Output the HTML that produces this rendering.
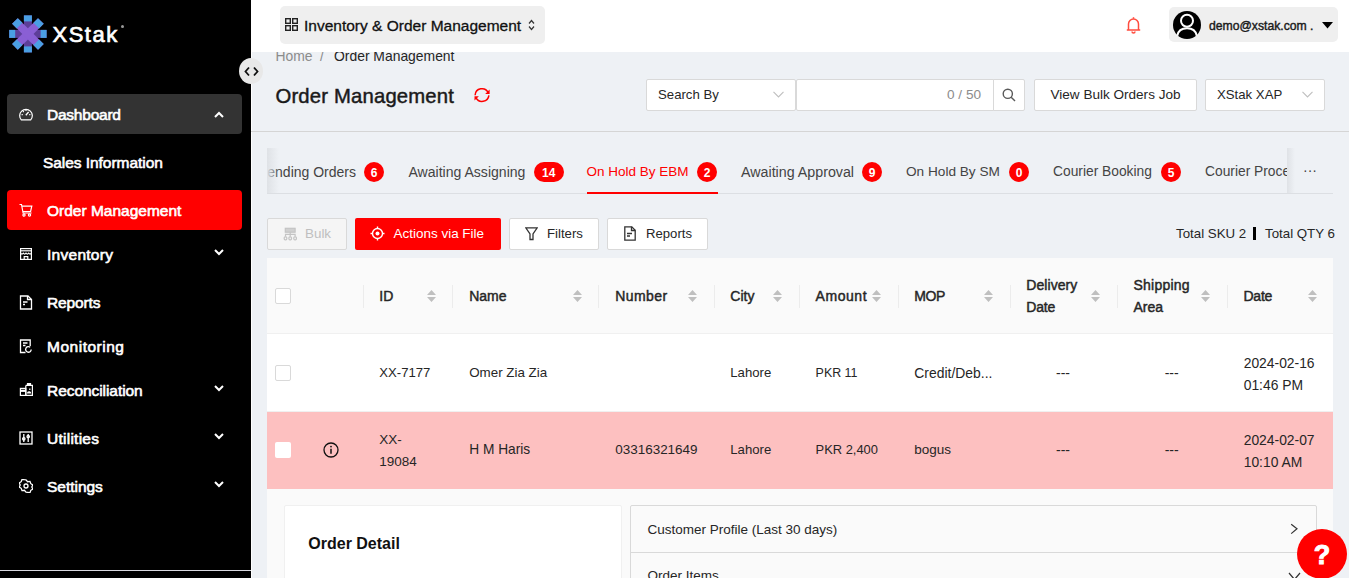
<!DOCTYPE html>
<html><head><meta charset="utf-8">
<style>
*{box-sizing:border-box;margin:0;padding:0}
html,body{width:1349px;height:578px;overflow:hidden;background:#eef1f5;font-family:"Liberation Sans",sans-serif;color:#222}
.a{position:absolute}
.t{position:absolute;white-space:nowrap;line-height:20px}
#side{position:absolute;left:0;top:0;width:252px;height:578px;background:#000;border-right:1px solid #fff}
#side .item{position:absolute;left:7px;width:235px;height:40px;border-radius:4px}
#side .lbl{position:absolute;left:47px;color:#fff;font-size:15.5px;line-height:20px;white-space:nowrap;-webkit-text-stroke:0.6px #fff}
#side svg{position:absolute}
.bd{height:20px;border-radius:10px;background:#f00;color:#fff;font-weight:bold;font-size:12px;line-height:22px;text-align:center}
.hd{color:#262626;-webkit-text-stroke:0.45px #262626}
.td{color:#262626}
#top{position:absolute;left:252px;top:0;width:1097px;height:52px;background:#fff}
</style></head><body>

<!-- SIDEBAR -->
<div id="side">
  <!-- logo -->
  <svg class="a" style="left:6px;top:12px" width="44" height="44" viewBox="0 0 44 44">
    <g transform="translate(21.9 21.9)">
      <rect x="-4" y="-18.5" width="8" height="37" fill="#5d3e98"/>
      <rect x="-18.7" y="-4" width="37.4" height="8" fill="#5d3e98"/>
      <rect x="-4" y="-18.5" width="8" height="6" fill="#4a9fe3"/>
      <rect x="-4" y="12.5" width="8" height="6" fill="#4a9fe3"/>
      <rect x="-18.7" y="-4" width="6" height="8" fill="#4a9fe3"/>
      <rect x="12.7" y="-4" width="6" height="8" fill="#4a9fe3"/>
      <g transform="rotate(45)">
        <rect x="-4" y="-18.3" width="8" height="36.6" fill="#8a5fd4"/>
        <rect x="-18.3" y="-4" width="36.6" height="8" fill="#8a5fd4"/>
        <rect x="-4" y="-18.3" width="8" height="6.5" fill="#4a9fe3"/>
        <rect x="-4" y="11.8" width="8" height="6.5" fill="#4a9fe3"/>
        <rect x="-18.3" y="-4" width="6.5" height="8" fill="#4a9fe3"/>
        <rect x="11.8" y="-4" width="6.5" height="8" fill="#4a9fe3"/>
      </g>
    </g>
  </svg>
  <div class="t" style="left:52.5px;top:23px;font-size:22px;line-height:24px;color:#fff;letter-spacing:1.5px;-webkit-text-stroke:0.7px #fff">XStak</div>
  <div class="a" style="left:121px;top:25px;width:3px;height:3px;border-radius:2px;background:#999"></div>

  <div class="item" style="top:94px;height:40px;background:#333"></div>
  <svg style="left:19px;top:107px" width="14" height="14" viewBox="0 0 14 14" fill="none" stroke="#fff" stroke-width="1.2">
    <path d="M2.3 12.8A6.3 6.3 0 1 1 11.7 12.8Z"/>
    <path d="M6.8 8.2L9.6 5" stroke-width="1.3"/>
    <path d="M2.6 7.6h1.2M10.2 7.6h1.2M4 4.2l.8.8M7 2.8v1.1"/>
  </svg>
  <div class="lbl" style="top:105px;letter-spacing:-0.23px">Dashboard</div>
  <svg style="left:214px;top:111px" width="10" height="7" viewBox="0 0 10 7" fill="none" stroke="#fff" stroke-width="2"><path d="M1 6 L5 2 L9 6"/></svg>

  <div class="lbl" style="left:43px;top:153px;letter-spacing:-0.05px">Sales Information</div>

  <div class="item" style="top:190px;background:#f00"></div>
  <svg style="left:19px;top:203px" width="14" height="14" viewBox="0 0 14 14" fill="none" stroke="#fff" stroke-width="1.2">
    <path d="M0.5 1.5h2l1.6 8.5h8.5"/>
    <path d="M3 3.2h9.8l-1.2 5.3H4"/>
    <circle cx="5" cy="12" r="1.1"/><circle cx="10.5" cy="12" r="1.1"/>
  </svg>
  <div class="lbl" style="top:201px;letter-spacing:0.00px">Order Management</div>

  <svg style="left:19px;top:247px" width="14" height="14" viewBox="0 0 14 14" fill="none" stroke="#fff" stroke-width="1.2">
    <rect x="1.6" y="1.6" width="10.8" height="10.8"/>
    <path d="M1.6 3.8h10.8"/>
    <path d="M1.6 6.2c.9 1.2 1.8 1.2 2.7 0c.9 1.2 1.8 1.2 2.7 0c.9 1.2 1.8 1.2 2.7 0c.9 1.2 1.8 1.2 2.7 0"/>
    <path d="M5.2 12.4V9.6h3.6v2.8"/>
  </svg>
  <div class="lbl" style="top:245px;letter-spacing:0.27px">Inventory</div>
  <svg style="left:214px;top:249px" width="10" height="7" viewBox="0 0 10 7" fill="none" stroke="#fff" stroke-width="2"><path d="M1 1 L5 5 L9 1"/></svg>

  <svg style="left:19px;top:295px" width="14" height="15" viewBox="0 0 14 15" fill="none" stroke="#fff" stroke-width="1.3">
    <path d="M1.5 1h7.5l3.5 3.5V14H1.5Z"/>
    <path d="M8.5 1v3.5h4"/>
    <path d="M4 7h4.5M4 9.5h2"/>
  </svg>
  <div class="lbl" style="top:293px;letter-spacing:-0.13px">Reports</div>

  <svg style="left:19px;top:339px" width="14" height="15" viewBox="0 0 14 15" fill="none" stroke="#fff" stroke-width="1.3">
    <path d="M6.5 13.5H1.5V1H11.2V7"/>
    <path d="M4 4h4.5M4 6.5h2.5"/>
    <path d="M12.2 10.5a2.8 2.8 0 1 1-1-2.2"/>
  </svg>
  <div class="lbl" style="top:337px;letter-spacing:0.51px">Monitoring</div>

  <svg style="left:19px;top:382px" width="14" height="15" viewBox="0 0 14 15" fill="none" stroke="#fff" stroke-width="1.2">
    <path d="M6.8 3.4H13.4V13.4H6.8"/>
    <path d="M6.8 3.4V13.4"/>
    <path d="M8.5 1.5h3v2h-3z" fill="#fff"/>
    <rect x="1.4" y="6.4" width="5.4" height="7"/>
    <path d="M1.4 8.8h5.4" stroke-width="2.2"/>
    <path d="M8.6 11h3c0-1.6-3-1.6-3 0Z" fill="#fff"/>
    <path d="M10.8 6.5v1.6"/>
  </svg>
  <div class="lbl" style="top:381px;letter-spacing:-0.06px">Reconciliation</div>
  <svg style="left:214px;top:385px" width="10" height="7" viewBox="0 0 10 7" fill="none" stroke="#fff" stroke-width="2"><path d="M1 1 L5 5 L9 1"/></svg>

  <svg style="left:19px;top:431px" width="14" height="14" viewBox="0 0 14 14" fill="none" stroke="#fff" stroke-width="1.3">
    <rect x="1" y="1" width="12" height="12"/>
    <path d="M4.8 3v8M9.2 3v8"/>
    <circle cx="4.8" cy="7.8" r="1.2"/><circle cx="9.2" cy="5.5" r="1.2"/>
  </svg>
  <div class="lbl" style="top:429px;letter-spacing:0.25px">Utilities</div>
  <svg style="left:214px;top:433px" width="10" height="7" viewBox="0 0 10 7" fill="none" stroke="#fff" stroke-width="2"><path d="M1 1 L5 5 L9 1"/></svg>

  <svg style="left:19px;top:479px" width="14" height="14" viewBox="0 0 14 14" fill="none" stroke="#fff" stroke-width="1.3">
    <path d="M7 0.8l1.6 1.9 2.4-.3.8 2.3 2 1.3-1 2 1 2-2 1.3-.8 2.3-2.4-.3L7 13.2 5.4 11.3 3 11.6l-.8-2.3-2-1.3 1-2-1-2 2-1.3.8-2.3 2.4.3Z"/>
    <circle cx="7" cy="7" r="2"/>
  </svg>
  <div class="lbl" style="top:477px;letter-spacing:-0.02px">Settings</div>
  <svg style="left:214px;top:481px" width="10" height="7" viewBox="0 0 10 7" fill="none" stroke="#fff" stroke-width="2"><path d="M1 1 L5 5 L9 1"/></svg>

  <div class="a" style="left:0;top:570px;width:251px;height:1px;background:#d8d8e0"></div>
</div>

<!-- breadcrumb -->
<div class="t" style="left:275.5px;top:46px;font-size:13.9px;color:#8c8c8c">Home</div>
<div class="t" style="left:320px;top:46px;font-size:13.9px;color:#8c8c8c">/</div>
<div class="t" style="left:334px;top:46px;font-size:13.9px;color:#262626">Order Management</div>

<!-- CONTENT -->
<div class="t" style="left:275.5px;top:85px;font-size:20.3px;line-height:22px;color:#1a1a1a;-webkit-text-stroke:0.45px #1a1a1a;letter-spacing:0.17px">Order Management</div>
<svg class="a" style="left:474px;top:87px" width="16" height="16" viewBox="0 0 16 16" fill="none" stroke="#f00" stroke-width="1.5">
  <path d="M1.1 8.2A6.9 6.9 0 0 1 14.2 5.6"/><path d="M14.9 8.3A6.9 6.9 0 0 1 1.9 10.6"/>
  <path d="M15.6 2.6V7H11.2Z" fill="#f00" stroke="none"/><path d="M0.5 13.6V9.2H4.9Z" fill="#f00" stroke="none"/>
</svg>

<div class="a" style="left:251px;top:131px;width:1098px;height:1px;background:#d5d5d5"></div>

<!-- search row -->
<div class="a" style="left:646px;top:79px;width:150px;height:32px;background:#fff;border:1px solid #d9d9d9;border-radius:2px"></div>
<div class="t" style="left:658px;top:85px;font-size:13.2px;color:#262626">Search By</div>
<svg class="a" style="left:773px;top:91px" width="11" height="7" viewBox="0 0 11 7" fill="none" stroke="#bfbfbf" stroke-width="1.1"><path d="M0.5 0.8L5.5 6L10.5 0.8"/></svg>
<div class="a" style="left:796px;top:79px;width:198px;height:32px;background:#fff;border:1px solid #d9d9d9;border-radius:2px 0 0 2px"></div>
<div class="t" style="left:947px;top:85px;font-size:13.6px;color:#8c8c8c">0 / 50</div>
<div class="a" style="left:993px;top:79px;width:32px;height:32px;background:#fff;border:1px solid #d9d9d9;border-radius:0 2px 2px 0"></div>
<svg class="a" style="left:1002px;top:88px" width="14" height="14" viewBox="0 0 14 14" fill="none" stroke="#595959" stroke-width="1.4"><circle cx="5.8" cy="5.8" r="4.6"/><path d="M9.2 9.2L13 13"/></svg>
<div class="a" style="left:1034px;top:79px;width:163px;height:32px;background:#fff;border:1px solid #d9d9d9;border-radius:2px"></div>
<div class="t" style="left:1050.5px;top:85px;font-size:13.55px;color:#262626">View Bulk Orders Job</div>
<div class="a" style="left:1205px;top:79px;width:120px;height:32px;background:#fff;border:1px solid #d9d9d9;border-radius:2px"></div>
<div class="t" style="left:1217px;top:85px;font-size:13.2px;color:#262626">XStak XAP</div>
<svg class="a" style="left:1302px;top:91px" width="11" height="7" viewBox="0 0 11 7" fill="none" stroke="#bfbfbf" stroke-width="1.1"><path d="M0.5 0.8L5.5 6L10.5 0.8"/></svg>

<!-- tabs -->
<div class="a" style="left:267px;top:193px;width:1066px;height:1px;background:#dcdfe3"></div>
<div class="t" style="left:228px;top:162px;font-size:14px;color:#444;width:128px;text-align:right;overflow:hidden;clip-path:inset(0 0 0 39px)">Pending Orders</div>
<div class="a" style="left:267px;top:148px;width:12px;height:45px;background:linear-gradient(to right,#dfe2e6,rgba(238,241,245,0))"></div>
<div class="a bd" style="left:364px;top:162px;width:20px">6</div>
<div class="t" style="left:408.5px;top:162px;font-size:14.06px;color:#444">Awaiting Assigning</div>
<div class="a bd" style="left:534px;top:162px;width:29.5px">14</div>
<div class="t" style="left:586.5px;top:162px;font-size:13.5px;color:#f00">On Hold By EBM</div>
<div class="a bd" style="left:697px;top:162px;width:20px">2</div>
<div class="a" style="left:586.5px;top:192px;width:131px;height:2px;background:#f00"></div>
<div class="t" style="left:741px;top:162px;font-size:14.25px;color:#444">Awaiting Approval</div>
<div class="a bd" style="left:862px;top:162px;width:20px">9</div>
<div class="t" style="left:906px;top:162px;font-size:13.64px;color:#444">On Hold By SM</div>
<div class="a bd" style="left:1009px;top:162px;width:20px">0</div>
<div class="t" style="left:1053px;top:162px;font-size:13.8px;color:#444">Courier Booking</div>
<div class="a bd" style="left:1161px;top:162px;width:20px">5</div>
<div class="t" style="left:1205px;top:162px;font-size:13.8px;color:#444;width:82px;overflow:hidden">Courier Processing</div>
<div class="a" style="left:1287px;top:148px;width:8px;height:45px;background:linear-gradient(to right,#dfe2e6,rgba(238,241,245,0))"></div>
<div class="t" style="left:1303px;top:160px;font-size:14px;color:#444;letter-spacing:0px">&middot;&middot;&middot;</div>

<!-- action buttons -->
<div class="a" style="left:267px;top:218px;width:80px;height:32px;background:#f5f5f5;border:1px solid #d9d9d9;border-radius:2px"></div>
<svg class="a" style="left:283px;top:227px" width="15" height="14" viewBox="0 0 15 14" fill="none" stroke="#c4c4c4" stroke-width="1.2"><rect x="2.3" y="1.3" width="9.8" height="3.9" fill="#d0d0d0"/><path d="M7.2 5.2v2.2M2.5 9.5V7.4h9.6v2.1M7.2 7.4v2.1"/><rect x="1.2" y="9.8" width="2.6" height="3" rx="1"/><rect x="5.9" y="9.8" width="2.6" height="3" rx="1"/><rect x="10.8" y="9.8" width="2.6" height="3" rx="1"/></svg>
<div class="t" style="left:305px;top:224px;font-size:13.4px;color:#bfbfbf">Bulk</div>
<div class="a" style="left:355px;top:218px;width:146px;height:32px;background:#f00;border-radius:2px"></div>
<svg class="a" style="left:370px;top:226px" width="15" height="15" viewBox="0 0 15 15" fill="none" stroke="#fff" stroke-width="1.4"><circle cx="7.5" cy="7.5" r="5"/><circle cx="7.5" cy="7.5" r="2" fill="#fff" stroke="none"/><path d="M7.5 0.5v2.5M7.5 12v2.5M0.5 7.5h2.5M12 7.5h2.5"/></svg>
<div class="t" style="left:393.5px;top:224px;font-size:13.48px;color:#fff">Actions via File</div>
<div class="a" style="left:509px;top:218px;width:90px;height:32px;background:#fff;border:1px solid #d9d9d9;border-radius:2px"></div>
<svg class="a" style="left:525px;top:227px" width="13" height="14" viewBox="0 0 13 14" fill="none" stroke="#333" stroke-width="1.3"><path d="M0.8 0.8h11.4L8 7v5.5H5V7Z"/></svg>
<div class="t" style="left:547px;top:224px;font-size:13.2px;color:#262626">Filters</div>
<div class="a" style="left:607px;top:218px;width:101px;height:32px;background:#fff;border:1px solid #d9d9d9;border-radius:2px"></div>
<svg class="a" style="left:624px;top:226px" width="12" height="15" viewBox="0 0 12 15" fill="none" stroke="#333" stroke-width="1.3"><path d="M0.8 0.8h7l3.4 3.4v10H0.8Z"/><path d="M7.5 0.8v3.7h3.7M3 7.5h5M3 10h3"/></svg>
<div class="t" style="left:646px;top:224px;font-size:13.14px;color:#262626">Reports</div>

<div class="t" style="left:1176px;top:224px;font-size:13.3px;color:#262626">Total SKU 2</div>
<div class="a" style="left:1252.5px;top:227px;width:3px;height:13px;background:#000"></div>
<div class="t" style="left:1265px;top:224px;font-size:13.3px;color:#262626">Total QTY 6</div>

<!-- TABLE -->
<div class="a" style="left:267px;top:258px;width:1066px;height:76px;background:#fafafa;border-bottom:1px solid #f0f0f0"></div>
<div class="a" style="left:267px;top:334px;width:1066px;height:78px;background:#fff;border-bottom:1px solid #f0f0f0"></div>
<div class="a" style="left:267px;top:411.5px;width:1066px;height:77px;background:#fdc0c0"></div>
<div class="a" style="left:267px;top:488.5px;width:1066px;height:90px;background:#fafafa"></div>
<div class="a" style="left:362.5px;top:285px;width:1px;height:23px;background:#ececec"></div>
<div class="a" style="left:452.4px;top:285px;width:1px;height:23px;background:#ececec"></div>
<div class="a" style="left:598.4px;top:285px;width:1px;height:23px;background:#ececec"></div>
<div class="a" style="left:713.5px;top:285px;width:1px;height:23px;background:#ececec"></div>
<div class="a" style="left:798.8px;top:285px;width:1px;height:23px;background:#ececec"></div>
<div class="a" style="left:897.5px;top:285px;width:1px;height:23px;background:#ececec"></div>
<div class="a" style="left:1009.5px;top:285px;width:1px;height:23px;background:#ececec"></div>
<div class="a" style="left:1116.7px;top:285px;width:1px;height:23px;background:#ececec"></div>
<div class="a" style="left:1226.6px;top:285px;width:1px;height:23px;background:#ececec"></div>
<div class="t hd" style="left:379.3px;top:286px;font-size:14px">ID</div>
<svg class="a" style="left:426.9px;top:290px" width="9" height="12" viewBox="0 0 9 12"><path d="M4.5 0L9 5H0Z M4.5 12L9 7H0Z" fill="#bfbfbf"/></svg>
<div class="t hd" style="left:469.2px;top:286px;font-size:14px">Name</div>
<svg class="a" style="left:572.9px;top:290px" width="9" height="12" viewBox="0 0 9 12"><path d="M4.5 0L9 5H0Z M4.5 12L9 7H0Z" fill="#bfbfbf"/></svg>
<div class="t hd" style="left:615.2px;top:286px;font-size:14px;letter-spacing:0.45px">Number</div>
<svg class="a" style="left:688.0px;top:290px" width="9" height="12" viewBox="0 0 9 12"><path d="M4.5 0L9 5H0Z M4.5 12L9 7H0Z" fill="#bfbfbf"/></svg>
<div class="t hd" style="left:730.3px;top:286px;font-size:14px">City</div>
<svg class="a" style="left:773.3px;top:290px" width="9" height="12" viewBox="0 0 9 12"><path d="M4.5 0L9 5H0Z M4.5 12L9 7H0Z" fill="#bfbfbf"/></svg>
<div class="t hd" style="left:815.6px;top:286px;font-size:14px;letter-spacing:0.55px">Amount</div>
<svg class="a" style="left:872.0px;top:290px" width="9" height="12" viewBox="0 0 9 12"><path d="M4.5 0L9 5H0Z M4.5 12L9 7H0Z" fill="#bfbfbf"/></svg>
<div class="t hd" style="left:914.3px;top:286px;font-size:14px;letter-spacing:-0.45px">MOP</div>
<svg class="a" style="left:984.0px;top:290px" width="9" height="12" viewBox="0 0 9 12"><path d="M4.5 0L9 5H0Z M4.5 12L9 7H0Z" fill="#bfbfbf"/></svg>
<div class="t hd" style="left:1026.3px;top:275px;font-size:14px;letter-spacing:0.06px">Delivery</div>
<div class="t hd" style="left:1026.3px;top:297px;font-size:14px;letter-spacing:-0.19px">Date</div>
<svg class="a" style="left:1091.2px;top:290px" width="9" height="12" viewBox="0 0 9 12"><path d="M4.5 0L9 5H0Z M4.5 12L9 7H0Z" fill="#bfbfbf"/></svg>
<div class="t hd" style="left:1133.5px;top:275px;font-size:14px;letter-spacing:0.22px">Shipping</div>
<div class="t hd" style="left:1133.5px;top:297px;font-size:14px">Area</div>
<svg class="a" style="left:1201.1px;top:290px" width="9" height="12" viewBox="0 0 9 12"><path d="M4.5 0L9 5H0Z M4.5 12L9 7H0Z" fill="#bfbfbf"/></svg>
<div class="t hd" style="left:1243.4px;top:286px;font-size:14px;letter-spacing:-0.19px">Date</div>
<svg class="a" style="left:1307.5px;top:290px" width="9" height="12" viewBox="0 0 9 12"><path d="M4.5 0L9 5H0Z M4.5 12L9 7H0Z" fill="#bfbfbf"/></svg>
<div class="a" style="left:275px;top:288px;width:16px;height:16px;background:#fff;border:1px solid #d9d9d9;border-radius:2px"></div>
<div class="a" style="left:275px;top:365px;width:16px;height:16px;background:#fff;border:1px solid #d9d9d9;border-radius:2px"></div>
<div class="t td" style="left:379.3px;top:363px;font-size:13.11px">XX-7177</div>
<div class="t td" style="left:469.2px;top:363px;font-size:13.37px">Omer Zia Zia</div>
<div class="t td" style="left:730.3px;top:363px;font-size:13.17px">Lahore</div>
<div class="t td" style="left:815.6px;top:363px;font-size:12.45px">PKR 11</div>
<div class="t td" style="left:914.3px;top:363px;font-size:13.91px">Credit/Deb...</div>
<div class="t td" style="left:1243.7px;top:351.5px;font-size:13.87px;line-height:22px">2024-02-16<br>01:46 PM</div>
<div class="t td" style="left:1009.5px;width:107px;text-align:center;top:363px;font-size:14px">---</div>
<div class="t td" style="left:1116.7px;width:110px;text-align:center;top:363px;font-size:14px">---</div>
<div class="a" style="left:275px;top:442px;width:16px;height:16px;background:#fff;border-radius:2px"></div>
<svg class="a" style="left:323px;top:442px" width="16" height="16" viewBox="0 0 16 16" fill="none" stroke="#111" stroke-width="1.3"><circle cx="8" cy="8" r="7"/><path d="M8 6.8v5" stroke-width="1.5"/><circle cx="8" cy="4.6" r="0.9" fill="#111" stroke="none"/></svg>
<div class="t td" style="left:379.3px;top:428.5px;font-size:13.5px;line-height:22px">XX-<br>19084</div>
<div class="t td" style="left:469.2px;top:440px;font-size:13.73px">H M Haris</div>
<div class="t td" style="left:615.2px;top:440px;font-size:13.48px">03316321649</div>
<div class="t td" style="left:730.3px;top:440px;font-size:13.17px">Lahore</div>
<div class="t td" style="left:815.6px;top:440px;font-size:12.9px">PKR 2,400</div>
<div class="t td" style="left:914.3px;top:440px;font-size:13.50px">bogus</div>
<div class="t td" style="left:1243.7px;top:428.5px;font-size:13.87px;line-height:22px">2024-02-07<br>10:10 AM</div>
<div class="t td" style="left:1009.5px;width:107px;text-align:center;top:440px;font-size:14px">---</div>
<div class="t td" style="left:1116.7px;width:110px;text-align:center;top:440px;font-size:14px">---</div>
<div class="a" style="left:283.5px;top:505px;width:338px;height:80px;background:#fff;border:1px solid #f0f0f0;border-radius:2px"></div>
<div class="t" style="left:308.3px;top:534px;font-size:16px;font-weight:bold;color:#111">Order Detail</div>
<div class="a" style="left:630px;top:505px;width:687px;height:80px;background:#fafafa;border:1px solid #d9d9d9;border-radius:2px"></div>
<div class="a" style="left:631px;top:552px;width:685px;height:1px;background:#d9d9d9"></div>
<div class="t td" style="left:647.5px;top:520px;font-size:13.5px">Customer Profile (Last 30 days)</div>
<div class="t td" style="left:647.5px;top:566px;font-size:13.5px">Order Items</div>
<svg class="a" style="left:1290px;top:523px" width="9" height="12" viewBox="0 0 9 12" fill="none" stroke="#333" stroke-width="1.2"><path d="M1.2 1.2L7 5.8L1.2 10.6"/></svg>
<svg class="a" style="left:1288px;top:572px" width="13" height="9" viewBox="0 0 13 9" fill="none" stroke="#333" stroke-width="1.2"><path d="M1 1L6.5 7.5L12 1"/></svg>
<div class="a" style="left:1297px;top:529px;width:50px;height:50px;border-radius:50%;background:#f00"></div>
<div class="t" style="left:1297px;top:542px;width:50px;text-align:center;font-size:27px;line-height:27px;font-weight:bold;color:#fff;-webkit-text-stroke:1px #fff">?</div>

<!-- TOPBAR -->
<div id="top">
  <div class="a" style="left:28px;top:6px;width:265px;height:38px;background:#efefef;border-radius:5px"></div>
  <svg class="a" style="left:33px;top:18px" width="13" height="13" viewBox="0 0 13 13" fill="none" stroke="#222" stroke-width="1.4">
    <rect x="0.7" y="0.7" width="4.6" height="4.6"/><rect x="7.7" y="0.7" width="4.6" height="4.6"/>
    <rect x="0.7" y="7.7" width="4.6" height="4.6"/><rect x="7.7" y="7.7" width="4.6" height="4.6"/>
  </svg>
  <div class="t" style="left:52px;top:16px;font-size:15.5px;color:#111;-webkit-text-stroke:0.3px #111">Inventory &amp; Order Management</div>
  <svg class="a" style="left:276px;top:19px" width="7" height="12" viewBox="0 0 7 12" fill="none" stroke="#333" stroke-width="1.2"><path d="M1 4.5L3.5 1.5L6 4.5M1 7.5L3.5 10.5L6 7.5"/></svg>

  <svg class="a" style="left:874px;top:16px" width="15" height="18" viewBox="0 0 15 18" fill="none" stroke="#ff4d3f" stroke-width="1.5">
    <path d="M2.5 13.5V8a5 5 0 0 1 10 0v5.5M0.8 14h13.4"/>
    <path d="M7.5 1.2v1.6"/>
    <path d="M6 15.5a1.5 1.5 0 0 0 3 0"/>
  </svg>
  <div class="a" style="left:917px;top:7px;width:169px;height:35px;background:#efefef;border-radius:5px"></div>
  <svg class="a" style="left:921px;top:11px" width="28" height="28" viewBox="0 0 28 28">
    <circle cx="14" cy="14" r="14" fill="#000"/>
    <circle cx="14" cy="9.8" r="6" fill="none" stroke="#fff" stroke-width="2"/>
    <path d="M4.2 24.8C5.2 19.5 9.5 17.3 14 17.3S22.8 19.5 23.8 24.8" fill="none" stroke="#fff" stroke-width="2"/>
  </svg>
  <div class="t" style="left:957px;top:15.5px;font-size:12.2px;color:#1a1a1a;-webkit-text-stroke:0.4px #1a1a1a">demo@xstak.com .</div>
  <svg class="a" style="left:1070px;top:22px" width="11" height="7" viewBox="0 0 11 7"><path d="M0 0H11L5.5 6.5Z" fill="#000"/></svg>
</div>

<!-- collapse toggle -->
<div class="a" style="left:239px;top:58px;width:24px;height:26px;border-radius:50%;background:#e8e8e8"></div>
<svg class="a" style="left:243.5px;top:65.5px" width="15" height="11" viewBox="0 0 15 11" fill="none" stroke="#111" stroke-width="1.8"><path d="M5 1.5L1.5 5.5L5 9.5M10 1.5L13.5 5.5L10 9.5"/></svg>


</body></html>
